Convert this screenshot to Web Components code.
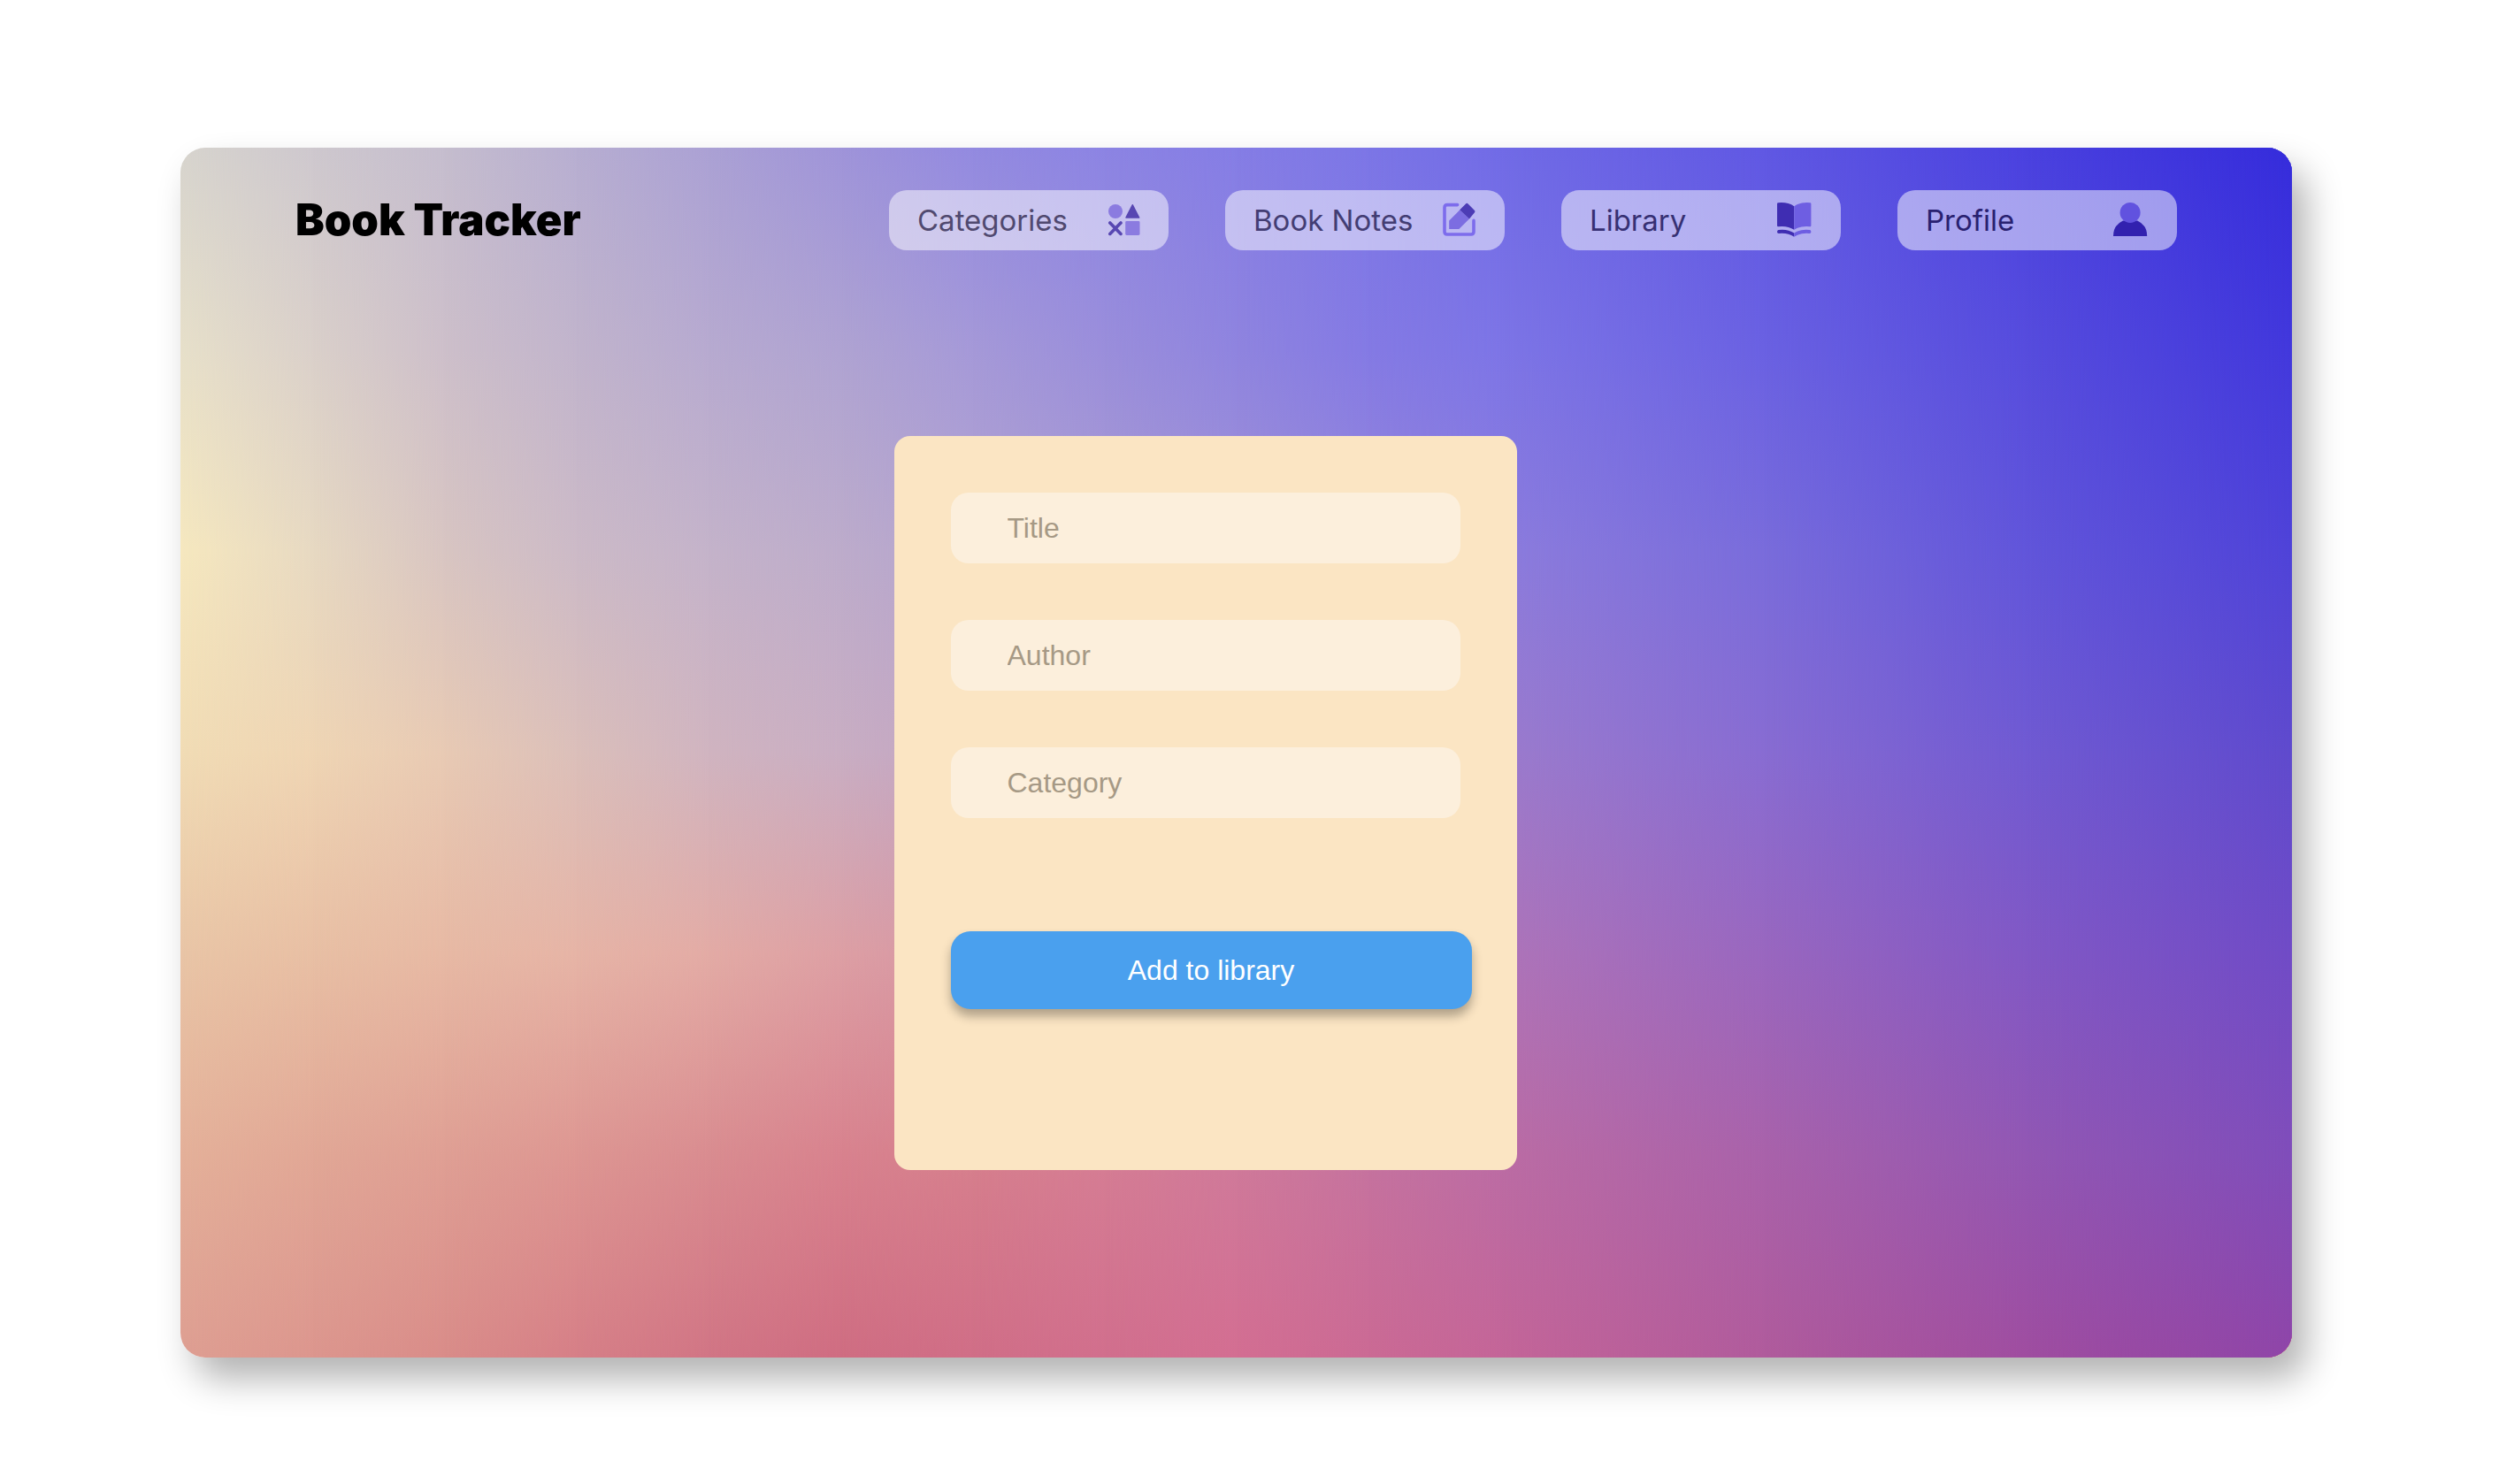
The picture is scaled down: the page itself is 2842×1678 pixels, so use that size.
<!DOCTYPE html>
<html lang="en">
<head>
<meta charset="utf-8">
<title>Book Tracker</title>
<style>
  body { margin: 0; background: #fff; font-family: Inter, "Open Sans", sans-serif; }
</style>
</head>
<body>
<book-app>
  <app-header slot="header">
    <nav-link href="#categories" ink="#50496f">Categories
      <svg slot="icon" viewBox="0 0 40 40" width="40" height="40" aria-hidden="true">
        <circle cx="12" cy="10" r="8" fill="#8b7be0"/>
        <path d="M31.3 2.8 38.6 17H24z" fill="#5847b2" stroke="#5847b2" stroke-width="1.6" stroke-linejoin="round"/>
        <path d="M5.8 23 18 35.4M18 23 5.8 35.4" stroke="#5847b2" stroke-width="3.6" stroke-linecap="round"/>
        <rect x="23.2" y="21" width="16.3" height="16" rx="1.4" fill="#8b7be0"/>
      </svg>
    </nav-link>
    <nav-link href="#notes" ink="#433d73">Book Notes
      <svg slot="icon" viewBox="0 0 40 40" width="40" height="40" aria-hidden="true">
        <path d="M18.6 2.6H7Q4 2.6 4 5.6V33Q4 36 7 36H34Q37 36 37 33V20.4" fill="none" stroke="#7d6cec" stroke-width="3.6" stroke-linecap="round"/>
        <path d="M9.2 20.6 21.4 8.2 32 18.4 20.4 30H9.2z" fill="#7c6de1"/>
        <path d="M29.2.8Q30 .8 30.6 1.4L38 9Q39 10 38 11.2L32 18.4 21.2 8.2 28 1.4Q28.6.8 29.2.8z" fill="#4c3cb5"/>
      </svg>
    </nav-link>
    <nav-link href="#library" ink="#363073">Library
      <svg slot="icon" viewBox="0 0 40 40" width="40" height="40" aria-hidden="true">
        <path d="M0 1.4Q0 .3 1.2.2 12-.8 19.2 4.2V30.8Q12 26 1.2 27.2 0 27.2 0 26z" fill="#3f2db2"/>
        <path d="M38.4 1.4Q38.4.3 37.2.2 26.4-.8 19.2 4.2V30.8Q26.4 26 37.2 27.2 38.4 27.2 38.4 26z" fill="#6e5ee2"/>
        <path d="M1.4 31Q12 29.6 19.2 34.6V38.8Q12 34 1.8 35 0 35 0 33.2 0 31.2 1.4 31z" fill="#3f2db2"/>
        <path d="M37 31Q26.4 29.6 19.2 34.6V38.8Q26.4 34 36.6 35 38.4 35 38.4 33.2 38.4 31.2 37 31z" fill="#6e5ee2"/>
      </svg>
    </nav-link>
    <nav-link href="#profile" ink="#292170">Profile
      <svg slot="icon" viewBox="0 0 40 40" width="40" height="40" aria-hidden="true">
        <path d="M0 38Q0 25.5 11 20.4H27.2Q38.2 25.5 38.2 38z" fill="#3221af"/>
        <circle cx="19.1" cy="11.4" r="11.5" fill="#6152df"/>
      </svg>
    </nav-link>
  </app-header>
  <book-form></book-form>
</book-app>

<script>
function attach(el, html) {
  el.attachShadow({ mode: 'open' }).innerHTML = html;
}

// Colour field: one vertical gradient per column, blended sideways with masks.
// Each entry starts with the column's position in sixteenths of the width.
class MeshBackdrop extends HTMLElement {
  constructor() {
    super();
    const columns = [
      [0, '#d7d4ce', '#e7e0ca', '#f6e8bf', '#f1dcb5', '#e9c5a6', '#e4b099', '#de9e92'],
      [1, '#cec8ce', '#dad0ca', '#e7d9c2', '#efd5b4', '#e8bfa4', '#e1a796', '#dc968e'],
      [2, '#c5bdce', '#cdbfca', '#d8c5c2', '#e8cab4', '#e7b9a4', '#df9f94', '#d98c89'],
      [3, '#b7aed1', '#c1b4cc', '#ccbac7', '#dbbfba', '#e6b4a6', '#dd9692', '#d67f87'],
      [4, '#aba1d4', '#b7aad0', '#c4b3ca', '#d0b4c0', '#e3aba5', '#d98c90', '#d17585'],
      [5, '#9f94d9', '#afa3d2', '#bdaccb', '#c9aec3', '#dd9fa4', '#d8828e', '#cf6d82'],
      [6, '#938ae0', '#a599d8', '#b3a3d0', '#c1a3c3', '#d595a5', '#d67f8d', '#d06e87'],
      [7, '#8c84e3', '#9a8edb', '#aa9bd2', '#b998c6', '#cb8dac', '#d57d94', '#d16f8d'],
      [8, '#857de5', '#8f84df', '#a092d6', '#b08fc9', '#c084b0', '#cf7a9a', '#d36e92'],
      [9, '#7c76e6', '#847ae4', '#9686da', '#a686cb', '#b87bb4', '#c5739f', '#cb6a94'],
      [10, '#716be6', '#7d75e6', '#8c7cdd', '#9b7bcd', '#ae74b9', '#bb6ca4', '#c46598'],
      [12, '#6058e3', '#6a61e2', '#796cdb', '#886cd2', '#9967bf', '#a962aa', '#b05b9c'],
      [14, '#4a41df', '#564cdd', '#6155da', '#705ad2', '#8158c5', '#9257b3', '#9f4da0'],
      [16, '#352cdb', '#4238dc', '#4f43d8', '#5f4acd', '#704bc6', '#804dba', '#8f45a8']
    ];
    const at = n => n * 100 / 16 + '%';
    const layers = columns.map(([x, ...stops], i) => {
      const mask = i ? `;mask-image:linear-gradient(to right,transparent ${at(columns[i - 1][0])},#000 ${at(x)})` : '';
      return `<div style="background:linear-gradient(${stops.join(',')})${mask}"></div>`;
    }).join('');
    attach(this, `<style>
      :host { display: grid; overflow: hidden; }
      div { grid-area: 1 / 1; }
    </style>${layers}`);
  }
}

class BookApp extends HTMLElement {
  constructor() {
    super();
    attach(this, `<style>
      :host { display: grid; box-sizing: border-box; min-height: 100vh; padding: 167px 251px 143px 204px; }
      .window { display: grid; border-radius: 28px; box-shadow: 16px 24px 40px rgba(0,0,0,.3); }
      mesh-backdrop, .content { grid-area: 1 / 1; }
      mesh-backdrop { border-radius: inherit; }
      .content { z-index: 1; display: flex; flex-direction: column; }
      main { display: flex; justify-content: center; padding: 210px 70px 64px 0; }
    </style>
    <div class="window">
      <mesh-backdrop></mesh-backdrop>
      <div class="content"><slot name="header"></slot><main><slot></slot></main></div>
    </div>`);
  }
}

class AppHeader extends HTMLElement {
  constructor() {
    super();
    attach(this, `<style>
      :host { display: block; }
      header { display: flex; justify-content: space-between; align-items: center; padding: 48px 130px 0; }
      h1 { margin: 0; font-size: 49px; line-height: 68px; font-weight: 900; color: #000; }
      nav { display: flex; gap: 64px; }
    </style>
    <header><h1>Book Tracker</h1><nav><slot></slot></nav></header>`);
  }
}

class NavLink extends HTMLElement {
  constructor() {
    super();
    attach(this, `<style>
      :host { display: block; }
      a { display: flex; justify-content: space-between; align-items: center; box-sizing: border-box;
          width: 316px; height: 68px; padding: 0 32px; border-radius: 20px;
          background: rgba(255,255,255,.5); text-decoration: none; font-size: 33px; white-space: nowrap; }
      ::slotted(svg) { display: block; overflow: visible; }
    </style>
    <a><span><slot></slot></span><slot name="icon"></slot></a>`);
    const link = this.shadowRoot.querySelector('a');
    link.href = this.getAttribute('href');
    link.style.color = this.getAttribute('ink');
  }
}

class BookForm extends HTMLElement {
  constructor() {
    super();
    attach(this, `<style>
      :host { display: block; }
      form { display: flex; flex-direction: column; gap: 64px; box-sizing: border-box;
             width: 704px; min-height: 830px; padding: 64px; border-radius: 18px; background: #fbe5c3; }
      input, button { font: 32px "Liberation Sans", Arial, sans-serif; border: 0; box-sizing: border-box; }
      input { width: 100%; height: 80px; padding: 0 64px; border-radius: 20px; background: #fcefdc; color: #4c4336; }
      input::placeholder { color: #a69985; opacity: 1; }
      button { width: 589px; height: 88px; margin-top: 64px; border-radius: 22px; background: #4aa0ee;
               color: #fff; box-shadow: 0 8px 12px rgba(0,0,0,.3); }
    </style>
    <form>
      <input type="text" name="title" placeholder="Title" aria-label="Title">
      <input type="text" name="author" placeholder="Author" aria-label="Author">
      <input type="text" name="category" placeholder="Category" aria-label="Category">
      <button type="button">Add to library</button>
    </form>`);
  }
}

customElements.define('mesh-backdrop', MeshBackdrop);
customElements.define('book-form', BookForm);
customElements.define('nav-link', NavLink);
customElements.define('app-header', AppHeader);
customElements.define('book-app', BookApp);
</script>
</body>
</html>
